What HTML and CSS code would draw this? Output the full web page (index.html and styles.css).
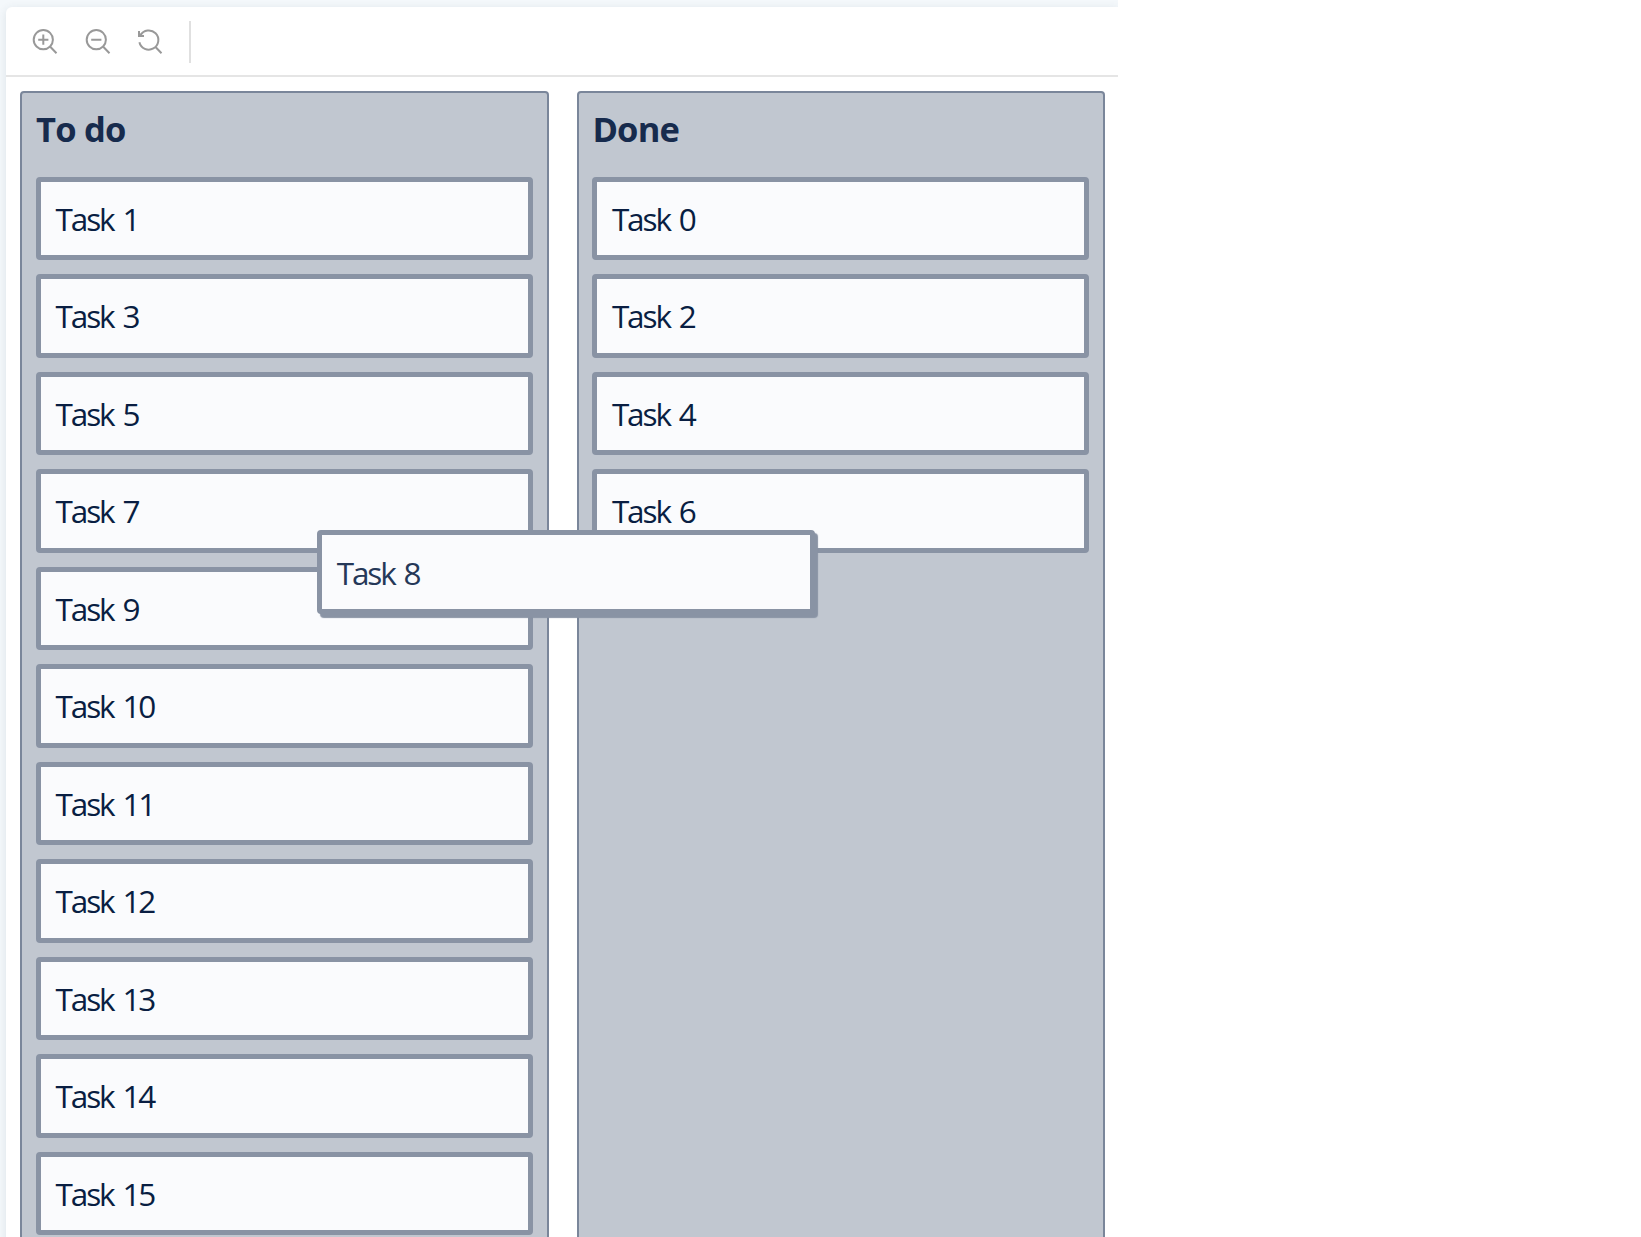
FILE: index.html
```
<!DOCTYPE html>
<html lang="en">
<head>
<meta charset="utf-8">
<title>Task board</title>
<link rel="stylesheet" href="styles.css">
</head>
<body>
<div class="app">
  <main class="panel">
    <div class="toolbar">
      <button class="tool" aria-label="Zoom in"><svg viewBox="0 0 28 28"><circle cx="12.3" cy="12.7" r="9.6"/><path d="M19 19.5l6.5 6.7M7.2 12.7h10.2M12.3 7.6v10.2"/></svg></button>
      <button class="tool" aria-label="Zoom out"><svg viewBox="0 0 28 28"><circle cx="12.3" cy="12.7" r="9.6"/><path d="M19 19.5l6.5 6.7M7.2 12.7h10.2"/></svg></button>
      <button class="tool" aria-label="Reset zoom"><svg viewBox="0 0 28 28"><path d="M4.4 8.3A9.6 9.6 0 1 1 3.4 15.2M19 19.5l6.5 6.7M3 4v5h5M3.4 8.6l2.4-2"/></svg></button>
      <span class="divider"></span>
    </div>
    <div class="board">
      <section class="column">
        <h2 class="title">To do</h2>
        <div class="cards">
          <div class="card">Task 1</div>
          <div class="card">Task 3</div>
          <div class="card">Task 5</div>
          <div class="card">Task 7</div>
          <div class="card">Task 9</div>
          <div class="card">Task 10</div>
          <div class="card">Task 11</div>
          <div class="card">Task 12</div>
          <div class="card">Task 13</div>
          <div class="card">Task 14</div>
          <div class="card">Task 15</div>
        </div>
      </section>
      <section class="column">
        <h2 class="title">Done</h2>
        <div class="cards">
          <div class="card">Task 0</div>
          <div class="card">Task 2</div>
          <div class="card">Task 4</div>
          <div class="card">Task 6</div>
        </div>
      </section>
    </div>
  </main>
  <div class="card dragged">Task 8</div>
</div>
</body>
</html>
```
FILE: styles.css
```
* { box-sizing: border-box; }
body {
  margin: 0;
  background: #fff;
  font-family: "Segoe UI", "Open Sans", "Noto Sans", sans-serif;
  color: #172b4d;
}
.app {
  position: relative;
  width: 1118px;
  height: 1237px;
  padding: 7px 0 0 6px;
  background: #f4f8fb;
  overflow: hidden;
}
.panel {
  height: 1260px;
  background: #fff;
  border-radius: 6px 0 0 0;
  box-shadow: 0 2px 10px rgba(50, 70, 90, .12);
}
.toolbar {
  display: flex;
  align-items: center;
  height: 70px;
  padding: 0 0 0 25px;
  border-bottom: 2px solid #e5e5e5;
}
.tool {
  width: 28px;
  height: 28px;
  margin: 0 24.5px 0 0;
  padding: 0;
  border: 0;
  background: none;
}
.tool svg {
  display: block;
  width: 28px;
  height: 28px;
  fill: none;
  stroke: #999;
  stroke-width: 2;
}
.divider {
  width: 2px;
  height: 42px;
  margin-top: 2px;
  background: #e0e0e0;
}
.board {
  display: flex;
  gap: 28px;
  padding: 14px 14.4px;
}
.column {
  flex: none;
  width: 528.4px;
  height: 1180px;
  padding: 14px 14px 14px 13.6px;
  background: #c1c7d0;
  border: 2px solid #7a869a;
  border-radius: 4px;
}
.title {
  height: 69.7px;
  margin: 0;
  font-size: 34.5px;
  line-height: 44px;
  font-weight: 700;
  letter-spacing: -.8px;
}
.cards {
  display: flex;
  flex-direction: column;
  gap: 13.75px;
}
.card {
  height: 83.75px;
  padding: 0 14.5px;
  border: 5px solid #8993a4;
  border-radius: 4px;
  background: #fafbfd;
  color: #091e42;
  font-size: 31.5px;
  font-weight: 400;
  line-height: 74.9px;
  letter-spacing: -2.1px;
  word-spacing: 2.8px;
  white-space: nowrap;
}
.dragged {
  position: absolute;
  left: 317.2px;
  top: 530px;
  width: 497.4px;
  height: 84px;
  line-height: 75px;
  color: #253858;
  box-shadow: 3px 3.5px 1px #8993a4;
}
```
